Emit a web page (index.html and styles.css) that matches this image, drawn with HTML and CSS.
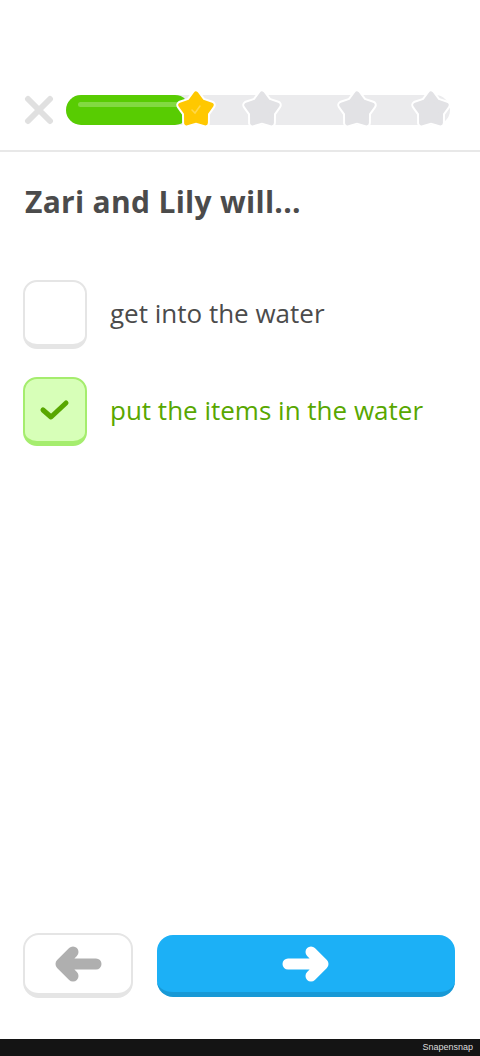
FILE: index.html
```html
<!DOCTYPE html>
<html lang="en">
<head>
  <meta charset="UTF-8">
  <meta name="viewport" content="width=device-width, initial-scale=1.0">
  <title>Lesson</title>
  <link rel="stylesheet" href="styles.css">
</head>
<body>
  <div class="app">
    <div class="header">
      <div class="progress-row">
        <svg class="close" width="30" height="30" viewBox="0 0 30 30">
          <path d="M4 4 L26 26 M26 4 L4 26" stroke="#e0e0e0" stroke-width="6" stroke-linecap="round"/>
        </svg>
        <div class="track">
          <div class="fill"><div class="shine"></div></div>
          <svg class="star" style="left:110px" viewBox="0 0 40 40">
            <polygon class="star-edge" points="20,5 25.88,12.91 35.22,16.06 29.51,24.09 29.4,33.94 20,31 10.6,33.94 10.49,24.09 4.78,16.06 14.12,12.91"/>
            <polygon class="star-gold" points="20,5 25.88,12.91 35.22,16.06 29.51,24.09 29.4,33.94 20,31 10.6,33.94 10.49,24.09 4.78,16.06 14.12,12.91"/>
            <path d="M16 21 L19 24 L24 17" stroke="#ffd84a" stroke-width="1.5" fill="none" stroke-linecap="round"/>
          </svg>
          <svg class="star" style="left:176px" viewBox="0 0 40 40">
            <polygon class="star-edge" points="20,5 25.88,12.91 35.22,16.06 29.51,24.09 29.4,33.94 20,31 10.6,33.94 10.49,24.09 4.78,16.06 14.12,12.91"/>
            <polygon class="star-grey" points="20,5 25.88,12.91 35.22,16.06 29.51,24.09 29.4,33.94 20,31 10.6,33.94 10.49,24.09 4.78,16.06 14.12,12.91"/>
          </svg>
          <svg class="star" style="left:271px" viewBox="0 0 40 40">
            <polygon class="star-edge" points="20,5 25.88,12.91 35.22,16.06 29.51,24.09 29.4,33.94 20,31 10.6,33.94 10.49,24.09 4.78,16.06 14.12,12.91"/>
            <polygon class="star-grey" points="20,5 25.88,12.91 35.22,16.06 29.51,24.09 29.4,33.94 20,31 10.6,33.94 10.49,24.09 4.78,16.06 14.12,12.91"/>
          </svg>
          <svg class="star" style="left:345px" viewBox="0 0 40 40">
            <polygon class="star-edge" points="20,5 25.88,12.91 35.22,16.06 29.51,24.09 29.4,33.94 20,31 10.6,33.94 10.49,24.09 4.78,16.06 14.12,12.91"/>
            <polygon class="star-grey" points="20,5 25.88,12.91 35.22,16.06 29.51,24.09 29.4,33.94 20,31 10.6,33.94 10.49,24.09 4.78,16.06 14.12,12.91"/>
          </svg>
        </div>
      </div>
    </div>

    <h1 class="question">Zari and Lily will...</h1>

    <div class="options">
      <div class="option">
        <div class="box"></div>
        <span class="label">get into the water</span>
      </div>
      <div class="option selected">
        <div class="box">
          <svg width="32" height="24" viewBox="0 0 32 24">
            <path d="M4 12 L12 19 L27 5" stroke="#58a700" stroke-width="5" fill="none" stroke-linecap="round" stroke-linejoin="round"/>
          </svg>
        </div>
        <span class="label">put the items in the water</span>
      </div>
    </div>

    <div class="footer">
      <button class="btn back">
        <svg width="50" height="38" viewBox="0 0 50 38">
          <path d="M43 19 H10 M20 7 L8 19 L20 31" stroke="#afafaf" stroke-width="11" fill="none" stroke-linecap="round" stroke-linejoin="round"/>
        </svg>
      </button>
      <button class="btn next">
        <svg width="50" height="38" viewBox="0 0 50 38">
          <path d="M7 19 H40 M30 7 L42 19 L30 31" stroke="#ffffff" stroke-width="11" fill="none" stroke-linecap="round" stroke-linejoin="round"/>
        </svg>
      </button>
    </div>
  </div>
  <div class="watermark">Snapensnap</div>
</body>
</html>
```

FILE: styles.css
```css
body {
  margin: 0;
  background: #fff;
  font-family: "Open Sans", "Noto Sans", sans-serif;
  color: #4b4b4b;
}
.app {
  height: 1039px;
  display: flex;
  flex-direction: column;
}
.header {
  padding-top: 90px;
  padding-bottom: 20px;
  border-bottom: 2px solid #e8e8e8;
}
.progress-row {
  display: flex;
  align-items: center;
  gap: 12px;
  height: 40px;
  padding: 0 30px 0 24px;
}
.close {
  flex: none;
}
.track {
  position: relative;
  flex: 1;
  height: 30px;
  border-radius: 15px;
  background: #ebebed;
}
.fill {
  width: 124px;
  height: 30px;
  border-radius: 15px;
  background: #58cc02;
  position: relative;
}
.shine {
  position: absolute;
  left: 12px;
  right: 10px;
  top: 7px;
  height: 5px;
  border-radius: 3px;
  background: rgba(255, 255, 255, 0.25);
}
.star {
  position: absolute;
  top: -6px;
  width: 40px;
  height: 40px;
}
.star-edge {
  fill: #fff;
  stroke: #fff;
  stroke-width: 9;
  stroke-linejoin: round;
}
.star-gold {
  fill: #ffc800;
  stroke: #ffc800;
  stroke-width: 5;
  stroke-linejoin: round;
}
.star-grey {
  fill: #e2e2e5;
  stroke: #e2e2e5;
  stroke-width: 5;
  stroke-linejoin: round;
}
.question {
  margin: 31px 25px 0;
  font-size: 30px;
  line-height: 38px;
  font-weight: 700;
  letter-spacing: 0.3px;
  color: #4b4b4b;
}
.options {
  margin-top: 59px;
  display: flex;
  flex-direction: column;
  gap: 28px;
  padding-left: 23px;
}
.option {
  display: flex;
  align-items: center;
  gap: 23px;
}
.box {
  box-sizing: border-box;
  width: 64px;
  height: 69px;
  border: 2px solid #e5e5e5;
  border-bottom-width: 5px;
  border-radius: 14px;
  background: #fff;
  display: flex;
  align-items: center;
  justify-content: center;
}
.label {
  font-size: 26px;
  line-height: 32px;
  margin-top: -3px;
  color: #4b4b4b;
}
.selected .box {
  background: #d7ffb8;
  border-color: #a5ed6e;
}
.selected .label {
  color: #58a700;
}
.footer {
  margin-top: auto;
  display: flex;
  align-items: flex-start;
  gap: 24px;
  padding: 0 25px 41px 23px;
}
.btn {
  box-sizing: border-box;
  display: flex;
  align-items: center;
  justify-content: center;
  border-radius: 16px;
  padding: 0;
  cursor: pointer;
}
.back {
  width: 110px;
  height: 65px;
  background: #fff;
  border: 2px solid #e5e5e5;
  border-bottom-width: 5px;
}
.next {
  flex: 1;
  height: 62px;
  margin-top: 2px;
  background: #1cb0f6;
  border: none;
  border-bottom: 5px solid #1899d6;
}
.watermark {
  height: 17px;
  background: #141414;
  color: #ddd;
  font-family: "Liberation Sans", sans-serif;
  font-size: 9px;
  line-height: 17px;
  text-align: right;
  padding-right: 7px;
}
```
